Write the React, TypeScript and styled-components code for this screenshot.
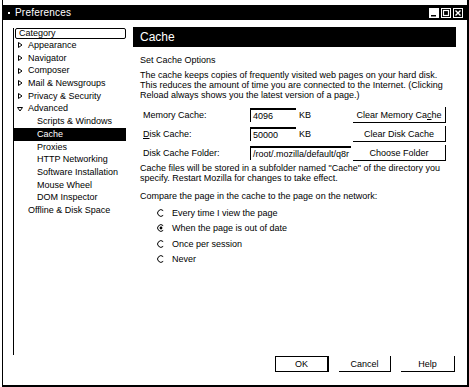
import styled, { createGlobalStyle } from 'styled-components';

const Global = createGlobalStyle`
  html, body {
    margin: 0;
    padding: 0;
    background: #fff;
  }
  body {
    font-family: "Liberation Sans", Arial, sans-serif;
    font-size: 9px;
    color: #000;
  }
`;

const S = {
  Frame: styled.div`
    box-sizing: border-box;
    width: 467px;
    height: 387px;
    margin-left: 2px;
    border-left: 1px solid #000;
    border-right: 2px solid #000;
    border-bottom: 2px solid #000;
    display: flex;
    flex-direction: column;
  `,
  TitleBar: styled.div`
    margin-top: 5px;
    height: 15px;
    background: #000;
    color: #fff;
    display: flex;
    align-items: center;
    padding: 0 4px 0 5px;
    font-size: 10px;
  `,
  TitleDot: styled.span`
    width: 2px;
    height: 2px;
    background: #fff;
    margin-right: 5px;
  `,
  TitleText: styled.span`
    flex: 1;
    letter-spacing: 0.2px;
  `,
  TitleButtons: styled.div`
    display: flex;
    gap: 2px;
  `,
  Main: styled.div`
    flex: 1;
    display: flex;
    padding-left: 10px;
  `,
  Sidebar: styled.div`
    margin-top: 8px;
    width: 113px;
    height: 327px;
    border-left: 1px solid #000;
    box-sizing: border-box;
  `,
  CategoryHead: styled.div`
    height: 11px;
    margin-left: 1px;
    border: 1px solid #000;
    border-radius: 2px;
    box-sizing: border-box;
    line-height: 9px;
    padding-left: 3px;
  `,
  TreeItem: styled.div<{ $level: number; $selected?: boolean }>`
    height: 12.7px;
    line-height: 12.7px;
    display: flex;
    align-items: center;
    padding-left: ${({ $level }) => ($level === 0 ? 2 : 23)}px;
    background: ${({ $selected }) => ($selected ? '#000' : 'transparent')};
    color: ${({ $selected }) => ($selected ? '#fff' : '#000')};
    white-space: nowrap;
  `,
  Twisty: styled.span`
    width: 7px;
    height: 7px;
    margin-right: 5px;
    display: inline-flex;
    align-items: center;
    justify-content: center;
  `,
  Content: styled.div`
    margin-top: 7px;
    margin-left: 7px;
    width: 323px;
    display: flex;
    flex-direction: column;
  `,
  Header: styled.div`
    height: 20px;
    background: #000;
    color: #fff;
    font-size: 12px;
    line-height: 20px;
    padding-left: 7px;
  `,
  Body: styled.div`
    padding-left: 7px;
    display: flex;
    flex-direction: column;
  `,
  Line: styled.div<{ $top: number }>`
    margin-top: ${({ $top }) => $top}px;
    line-height: 10px;
    white-space: nowrap;
  `,
  Rows: styled.div`
    margin-top: 7px;
    display: flex;
    flex-direction: column;
    gap: 3px;
    padding-right: 10px;
  `,
  Row: styled.div`
    height: 16px;
    display: flex;
    align-items: center;
  `,
  Label: styled.span`
    width: 107px;
    padding-left: 3px;
  `,
  Input: styled.div<{ $width: number }>`
    box-sizing: border-box;
    width: ${({ $width }) => $width}px;
    height: 14px;
    border-top: 2px solid #000;
    border-left: 1px solid #000;
    padding-left: 2px;
    line-height: 12px;
    overflow: hidden;
    white-space: nowrap;
  `,
  Unit: styled.span`
    margin-left: 3px;
    flex: 1;
  `,
  Spacer: styled.span`
    flex: 1;
  `,
  Button: styled.div<{ $width: number; $default?: boolean }>`
    box-sizing: border-box;
    width: ${({ $width }) => $width}px;
    height: 16px;
    display: flex;
    align-items: center;
    justify-content: center;
    border-right: ${({ $default }) => ($default ? 2 : 1)}px solid #000;
    border-bottom: 1px solid #000;
    border-top: ${({ $default }) => ($default ? '1px solid #000' : 'none')};
    border-left: ${({ $default }) => ($default ? '1px solid #000' : 'none')};
  `,
  Radios: styled.div`
    margin-top: 4px;
    padding-left: 17px;
    display: flex;
    flex-direction: column;
  `,
  Radio: styled.div`
    height: 15.5px;
    display: flex;
    align-items: center;
    gap: 7px;
  `,
  Footer: styled.div`
    display: flex;
    justify-content: flex-end;
    gap: 10px;
    padding: 0 12px 13px 0;
  `,
};

const Twisty = ({ open }: { open?: boolean }) => (
  <S.Twisty>
    <svg width="6" height="6" viewBox="0 0 6 6">
      {open ? (
        <path d="M0.5 1.5 H5.5 L3 5 Z" fill="none" stroke="#000" strokeWidth="1" />
      ) : (
        <path d="M1.5 0.5 V5.5 L5 3 Z" fill="none" stroke="#000" strokeWidth="1" />
      )}
    </svg>
  </S.Twisty>
);

const TitleButton = ({ kind }: { kind: 'min' | 'max' | 'close' }) => (
  <svg width="10" height="10" viewBox="0 0 10 10">
    {kind === 'min' && (
      <>
        <rect x="0" y="0" width="10" height="10" fill="#fff" />
        <rect x="2" y="7" width="5" height="1.5" fill="#000" />
      </>
    )}
    {kind === 'max' && (
      <>
        <rect x="0.5" y="0.5" width="9" height="9" fill="none" stroke="#fff" />
        <rect x="2.5" y="2.5" width="5" height="5" fill="none" stroke="#fff" strokeWidth="1.2" />
      </>
    )}
    {kind === 'close' && (
      <>
        <rect x="0.5" y="0.5" width="9" height="9" fill="none" stroke="#fff" />
        <path d="M2.5 2.5 L7.5 7.5 M7.5 2.5 L2.5 7.5" stroke="#fff" strokeWidth="1.4" />
      </>
    )}
  </svg>
);

const RadioMark = ({ checked }: { checked?: boolean }) => (
  <svg width="8" height="8" viewBox="0 0 8 8">
    <path d="M6.2 1.6 A3.3 3.3 0 1 0 6.2 6.4" fill="none" stroke="#000" strokeWidth="1" />
    {checked && <circle cx="4" cy="4" r="1.4" fill="#000" />}
  </svg>
);

const tree: { label: string; level: number; twisty?: 'open' | 'closed'; selected?: boolean }[] = [
  { label: 'Appearance', level: 0, twisty: 'closed' },
  { label: 'Navigator', level: 0, twisty: 'closed' },
  { label: 'Composer', level: 0, twisty: 'closed' },
  { label: 'Mail & Newsgroups', level: 0, twisty: 'closed' },
  { label: 'Privacy & Security', level: 0, twisty: 'closed' },
  { label: 'Advanced', level: 0, twisty: 'open' },
  { label: 'Scripts & Windows', level: 1 },
  { label: 'Cache', level: 1, selected: true },
  { label: 'Proxies', level: 1 },
  { label: 'HTTP Networking', level: 1 },
  { label: 'Software Installation', level: 1 },
  { label: 'Mouse Wheel', level: 1 },
  { label: 'DOM Inspector', level: 1 },
  { label: 'Offline & Disk Space', level: 0 },
];

const radios = [
  'Every time I view the page',
  'When the page is out of date',
  'Once per session',
  'Never',
];

export default function App() {
  return (
    <>
      <Global />
      <S.Frame>
        <S.TitleBar>
          <S.TitleDot />
          <S.TitleText>Preferences</S.TitleText>
          <S.TitleButtons>
            <TitleButton kind="min" />
            <TitleButton kind="max" />
            <TitleButton kind="close" />
          </S.TitleButtons>
        </S.TitleBar>
        <S.Main>
          <S.Sidebar>
            <S.CategoryHead>Category</S.CategoryHead>
            {tree.map((item) => (
              <S.TreeItem key={item.label} $level={item.level} $selected={item.selected}>
                {item.level === 0 &&
                  (item.twisty ? <Twisty open={item.twisty === 'open'} /> : <S.Twisty />)}
                {item.label}
              </S.TreeItem>
            ))}
          </S.Sidebar>
          <S.Content>
            <S.Header>Cache</S.Header>
            <S.Body>
              <S.Line $top={8}>Set Cache Options</S.Line>
              <S.Line $top={5}>
                The cache keeps copies of frequently visited web pages on your hard disk.
                <br />
                This reduces the amount of time you are connected to the Internet. (Clicking
                <br />
                Reload always shows you the latest version of a page.)
              </S.Line>
              <S.Rows>
                <S.Row>
                  <S.Label>Memory Cache:</S.Label>
                  <S.Input $width={46}>4096</S.Input>
                  <S.Unit>KB</S.Unit>
                  <S.Button $width={93}>
                    Clear Memory Ca<u>c</u>he
                  </S.Button>
                </S.Row>
                <S.Row>
                  <S.Label>
                    <u>D</u>isk Cache:
                  </S.Label>
                  <S.Input $width={46}>50000</S.Input>
                  <S.Unit>KB</S.Unit>
                  <S.Button $width={93}>Clear Disk Cache</S.Button>
                </S.Row>
                <S.Row>
                  <S.Label>Disk Cache Folder:</S.Label>
                  <S.Input $width={101}>/root/.mozilla/default/q8r</S.Input>
                  <S.Spacer />
                  <S.Button $width={93}>Choose Folder</S.Button>
                </S.Row>
              </S.Rows>
              <S.Line $top={2}>
                Cache files will be stored in a subfolder named "Cache" of the directory you
                <br />
                specify. Restart Mozilla for changes to take effect.
              </S.Line>
              <S.Line $top={8}>Compare the page in the cache to the page on the network:</S.Line>
              <S.Radios>
                {radios.map((r, i) => (
                  <S.Radio key={r}>
                    <RadioMark checked={i === 1} />
                    {r}
                  </S.Radio>
                ))}
              </S.Radios>
            </S.Body>
          </S.Content>
        </S.Main>
        <S.Footer>
          <S.Button $width={54} $default>
            OK
          </S.Button>
          <S.Button $width={52}>Cancel</S.Button>
          <S.Button $width={54}>Help</S.Button>
        </S.Footer>
      </S.Frame>
    </>
  );
}
